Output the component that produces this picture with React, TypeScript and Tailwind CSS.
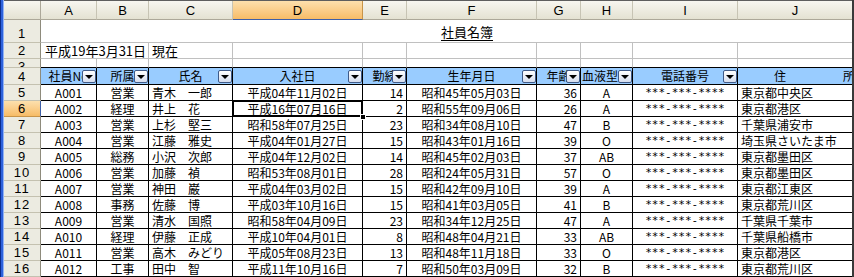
import React from 'react';

const widths = [
  'w-[56px]',
  'w-[52px]',
  'w-[84px]',
  'w-[130px]',
  'w-[44px]',
  'w-[130px]',
  'w-[44px]',
  'w-[52px]',
  'w-[105px]',
  'w-[114px]',
];

const letters = ['A', 'B', 'C', 'D', 'E', 'F', 'G', 'H', 'I', 'J'];

const aligns = [
  'justify-center',
  'justify-center',
  'justify-start pl-[3px]',
  'justify-center',
  'justify-end pr-[3px]',
  'justify-center',
  'justify-end pr-[3px]',
  'justify-center',
  "justify-center font-['DejaVu_Sans_Mono',monospace] text-[11px]",
  'justify-start pl-[3px]',
];

const data: string[][] = [
  ['A001', '営業', '青木　一郎', '平成04年11月02日', '14', '昭和45年05月03日', '36', 'A', '***-***-****', '東京都中央区'],
  ['A002', '経理', '井上　花', '平成16年07月16日', '2', '昭和55年09月06日', '26', 'A', '***-***-****', '東京都港区'],
  ['A003', '営業', '上杉　堅三', '昭和58年07月25日', '23', '昭和34年08月10日', '47', 'B', '***-***-****', '千葉県浦安市'],
  ['A004', '営業', '江藤　雅史', '平成04年01月27日', '15', '昭和43年01月16日', '39', 'O', '***-***-****', '埼玉県さいたま市'],
  ['A005', '総務', '小沢　次郎', '平成04年12月02日', '14', '昭和45年02月03日', '37', 'AB', '***-***-****', '東京都墨田区'],
  ['A006', '営業', '加藤　禎', '昭和53年08月01日', '28', '昭和24年05月31日', '57', 'O', '***-***-****', '東京都墨田区'],
  ['A007', '営業', '神田　巌', '平成04年03月02日', '15', '昭和42年09月10日', '39', 'A', '***-***-****', '東京都江東区'],
  ['A008', '事務', '佐藤　博', '平成03年10月16日', '15', '昭和41年03月05日', '41', 'B', '***-***-****', '東京都荒川区'],
  ['A009', '営業', '清水　国照', '昭和58年04月09日', '23', '昭和34年12月25日', '47', 'A', '***-***-****', '千葉県千葉市'],
  ['A010', '経理', '伊藤　正成', '平成10年04月01日', '8', '昭和48年04月21日', '33', 'AB', '***-***-****', '千葉県船橋市'],
  ['A011', '営業', '高木　みどり', '平成05年08月23日', '13', '昭和48年11月18日', '33', 'O', '***-***-****', '東京都港区'],
  ['A012', '工事', '田中　智', '平成11年10月16日', '7', '昭和50年03月09日', '32', 'B', '***-***-****', '東京都荒川区'],
];

const headers = ['社員No', '所属', '氏名', '入社日', '勤続', '生年月日', '年齢', '血液型', '電話番号'];

function RowHead({ n, h, sel }: { n: number; h: string; sel?: boolean }) {
  return (
    <div
      className={`w-[37px] shrink-0 ${h} flex items-center justify-center overflow-hidden border-b border-r font-['Liberation_Sans',sans-serif] text-[13px] tracking-[1px] ${
        sel
          ? 'bg-linear-to-b from-[#fde0ad] to-[#f7bc66] border-b-[#c89448] border-r-[#3d5fa8]'
          : 'bg-[#ecebe1] border-b-[#c4c1b0] border-r-[#8e8b7c]'
      }`}
    >
      {n}
    </div>
  );
}

function Drop() {
  return (
    <div className="absolute right-0 top-[2px] w-[14px] h-[13px] rounded-[2px] border border-[#3f5a88] bg-linear-to-b from-white to-[#d5ddee] flex items-center justify-center">
      <div className="w-0 h-0 border-x-[4px] border-x-transparent border-t-[4px] border-t-black" />
    </div>
  );
}

export default function App() {
  return (
    <div className="w-[854px] h-[277px] flex bg-white overflow-hidden font-['Noto_Sans_CJK_JP',sans-serif] text-[12px] text-black leading-none">
      <div className="w-[4px] shrink-0 border-l border-l-[#0c2c8c] border-r border-r-[#92b2f3] bg-[#2e62db]" />
      <div className="flex-1 min-w-0 flex flex-col border-t border-t-[#5e5e5e]">
        {/* column headers */}
        <div className="flex h-[19px] shrink-0">
          <div className="w-[37px] shrink-0 border-r border-r-[#aca899] border-b border-b-[#aca899] bg-linear-to-b from-[#f7f6f0] to-[#e4e2d2]" />
          {letters.map((l, i) => (
            <div
              key={l}
              className={`${widths[i]} shrink-0 flex items-center justify-center font-['Liberation_Sans',sans-serif] text-[13px] border-b ${
                i < 9 ? 'border-r' : ''
              } ${
                l === 'D'
                  ? 'bg-linear-to-b from-[#fde0ad] to-[#f7bc66] border-b-[#3d5fa8] border-r-[#c89448]'
                  : 'bg-linear-to-b from-[#f7f6f0] to-[#e4e2d2] border-b-[#aca899] border-r-[#c7c4b4]'
              }`}
            >
              {l}
            </div>
          ))}
        </div>

        {/* row 1 */}
        <div className="flex h-[23px] shrink-0">
          <RowHead n={1} h="h-[23px] pt-[4px]" />
          {letters.map((l, i) => (
            <div
              key={l}
              className={`${widths[i]} shrink-0 flex items-end pb-[4px] border-b border-b-[#c0c0c0] ${
                i === 5 ? 'justify-center pr-[10px] whitespace-nowrap' : ''
              }`}
            >
              {i === 5 ? <span className="text-[13px] underline underline-offset-[3px]">社員名簿</span> : null}
            </div>
          ))}
        </div>

        {/* row 2 */}
        <div className="flex h-[16px] shrink-0">
          <RowHead n={2} h="h-[16px]" />
          {letters.map((l, i) => (
            <div
              key={l}
              className={`${widths[i]} shrink-0 flex items-center border-b border-b-[#c0c0c0] whitespace-nowrap text-[13px] ${
                i > 0 && i < 9 ? 'border-r border-r-[#c0c0c0]' : ''
              } ${i === 0 ? 'pl-[4px]' : ''} ${i === 2 ? 'pl-[3px]' : ''}`}
            >
              {i === 0 ? '平成19年3月31日' : i === 2 ? '現在' : null}
            </div>
          ))}
        </div>

        {/* row 3 */}
        <div className="flex h-[9px] shrink-0">
          <RowHead n={3} h="h-[9px] items-start pt-[1px]" />
          {letters.map((l, i) => (
            <div
              key={l}
              className={`${widths[i]} shrink-0 border-b border-b-black ${i < 9 ? 'border-r border-r-[#c0c0c0]' : ''}`}
            />
          ))}
        </div>

        {/* row 4: table header */}
        <div className="flex h-[17px] shrink-0">
          <RowHead n={4} h="h-[17px]" />
          {headers.map((t, i) => (
            <div
              key={t}
              className={`${widths[i]} relative shrink-0 flex items-center overflow-hidden whitespace-nowrap border-r border-b border-black bg-[#99ccff] ${
                i === 7 ? 'justify-start pl-[1px]' : 'justify-center'
              }`}
            >
              <span>{t}</span>
              <Drop />
            </div>
          ))}
          <div className="w-[114px] shrink-0 flex items-center overflow-hidden whitespace-nowrap border-b border-black bg-[#99ccff] pl-[36px] gap-[57px]">
            <span>住</span>
            <span>所</span>
          </div>
        </div>

        {/* data rows */}
        {data.map((r, ri) => {
          const n = ri + 5;
          const sel = n === 6;
          return (
            <div key={n} className="flex h-[16px] shrink-0">
              <RowHead n={n} h="h-[16px]" sel={sel} />
              {r.map((v, i) =>
                sel && i === 3 ? (
                  <div
                    key={i}
                    className={`${widths[i]} relative shrink-0 flex items-center whitespace-nowrap border-b border-r border-black ${aligns[i]}`}
                  >
                    <span>{v}</span>
                    <div className="absolute left-[-1px] top-[-1px] right-[-1px] bottom-[-1px] border-2 border-black z-10" />
                    <div className="absolute right-[-4px] bottom-[-4px] w-[6px] h-[6px] bg-black border border-white z-20" />
                  </div>
                ) : (
                  <div
                    key={i}
                    className={`${widths[i]} shrink-0 flex items-center overflow-hidden whitespace-nowrap border-b border-black ${
                      i < 9 ? 'border-r' : ''
                    } ${aligns[i]}`}
                  >
                    <span>{v}</span>
                  </div>
                )
              )}
            </div>
          );
        })}
      </div>
      <div className="w-[2px] shrink-0 bg-[#3a3a3a]" />
    </div>
  );
}
